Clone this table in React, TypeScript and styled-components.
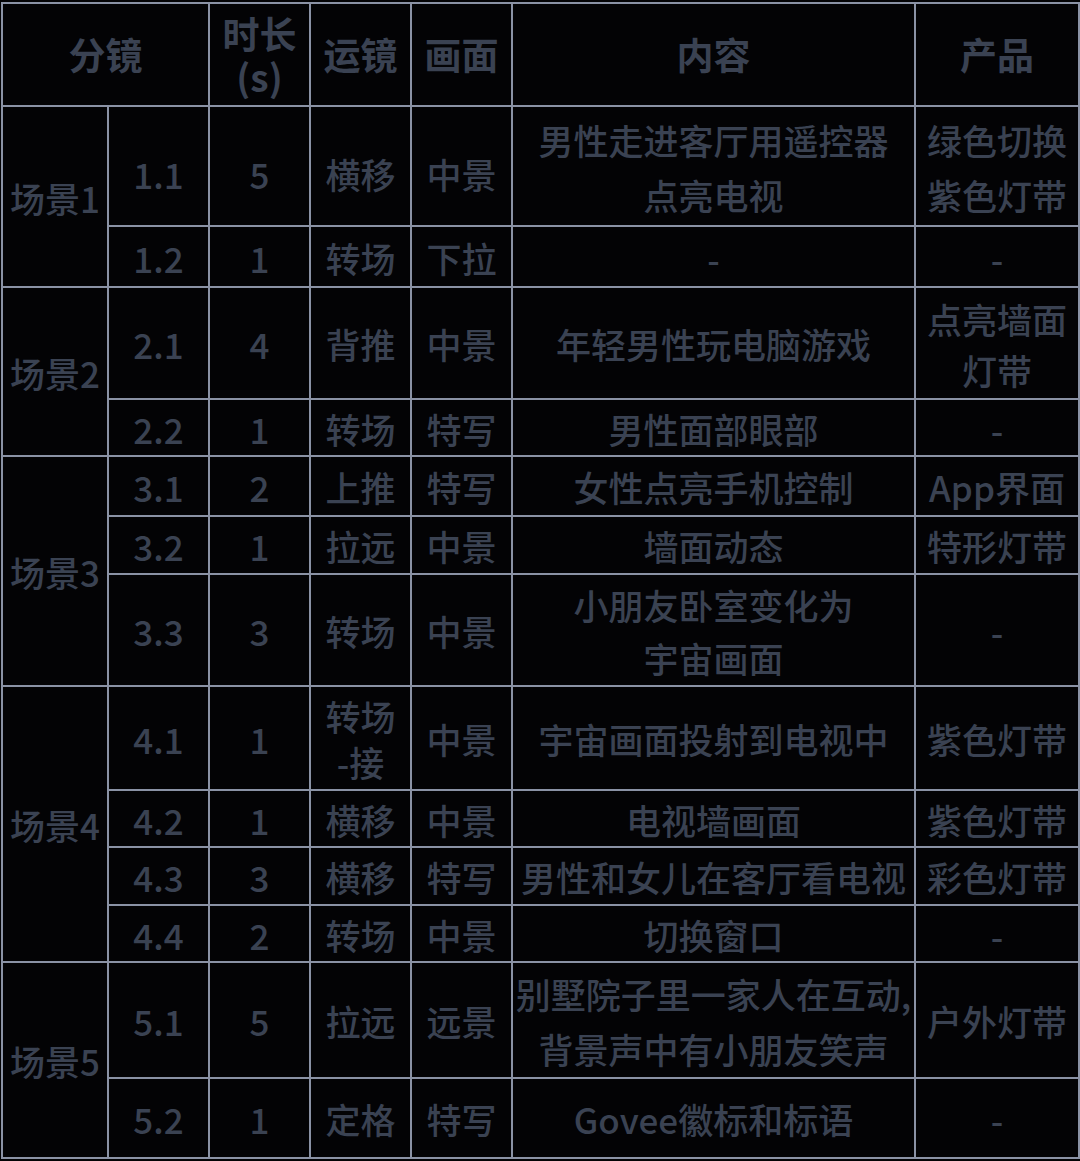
import React from "react";
import styled, { createGlobalStyle } from "styled-components";

const GlobalStyle = createGlobalStyle`
  html, body {
    margin: 0;
    padding: 0;
    background: #030305;
  }
  body {
    font-family: "Noto Sans CJK SC", "Noto Sans", sans-serif;
  }
`;

const Page = styled.div`
  padding: 2px 0 0 1px;
  background: #030305;
  min-height: 1161px;
  box-sizing: border-box;
`;

const Table = styled.table`
  width: 1077px;
  table-layout: fixed;
  border-collapse: collapse;
  color: #3a4252;
`;

const Row = styled.tr<{ $h: number }>`
  height: ${(p) => p.$h}px;
`;

const HeadCell = styled.th`
  border: 2px solid #8a92a5;
  padding: 0;
  font-size: 37px;
  font-weight: 700;
  line-height: 43px;
  text-align: center;
  vertical-align: middle;
`;

const Cell = styled.td<{ $drop?: boolean }>`
  border: 2px solid #8a92a5;
  padding: ${(p) => (p.$drop ? "16px" : "2px")} 0 0;
  font-size: 35px;
  font-weight: 500;
  line-height: 40px;
  text-align: center;
  vertical-align: middle;
  white-space: nowrap;
`;

const Lines = styled.span<{ $lh: number }>`
  display: inline-block;
  line-height: ${(p) => p.$lh}px;
  vertical-align: middle;
`;

type Shot = {
  id: string;
  dur: string;
  move: React.ReactNode;
  frame: string;
  content: React.ReactNode;
  product: React.ReactNode;
  h: number;
  drop?: boolean;
};

type Scene = { name: string; shots: Shot[] };

const two = (a: string, b: string, lh = 54) => (
  <Lines $lh={lh}>
    {a}
    <br />
    {b}
  </Lines>
);

const scenes: Scene[] = [
  {
    name: "场景1",
    shots: [
      {
        id: "1.1",
        dur: "5",
        move: "横移",
        frame: "中景",
        content: two("男性走进客厅用遥控器", "点亮电视", 55),
        product: two("绿色切换", "紫色灯带", 55),
        h: 120,
        drop: true,
      },
      { id: "1.2", dur: "1", move: "转场", frame: "下拉", content: "-", product: "-", h: 61 },
    ],
  },
  {
    name: "场景2",
    shots: [
      {
        id: "2.1",
        dur: "4",
        move: "背推",
        frame: "中景",
        content: "年轻男性玩电脑游戏",
        product: two("点亮墙面", "灯带", 51),
        h: 112,
      },
      { id: "2.2", dur: "1", move: "转场", frame: "特写", content: "男性面部眼部", product: "-", h: 57 },
    ],
  },
  {
    name: "场景3",
    shots: [
      { id: "3.1", dur: "2", move: "上推", frame: "特写", content: "女性点亮手机控制", product: "App界面", h: 60 },
      { id: "3.2", dur: "1", move: "拉远", frame: "中景", content: "墙面动态", product: "特形灯带", h: 58 },
      {
        id: "3.3",
        dur: "3",
        move: "转场",
        frame: "中景",
        content: two("小朋友卧室变化为", "宇宙画面", 53),
        product: "-",
        h: 112,
      },
    ],
  },
  {
    name: "场景4",
    shots: [
      {
        id: "4.1",
        dur: "1",
        move: two("转场", "-接", 46),
        frame: "中景",
        content: "宇宙画面投射到电视中",
        product: "紫色灯带",
        h: 104,
      },
      { id: "4.2", dur: "1", move: "横移", frame: "中景", content: "电视墙画面", product: "紫色灯带", h: 57 },
      { id: "4.3", dur: "3", move: "横移", frame: "特写", content: "男性和女儿在客厅看电视", product: "彩色灯带", h: 58 },
      { id: "4.4", dur: "2", move: "转场", frame: "中景", content: "切换窗口", product: "-", h: 57 },
    ],
  },
  {
    name: "场景5",
    shots: [
      {
        id: "5.1",
        dur: "5",
        move: "拉远",
        frame: "远景",
        content: two("别墅院子里一家人在互动,", "背景声中有小朋友笑声", 55),
        product: "户外灯带",
        h: 116,
      },
      { id: "5.2", dur: "1", move: "定格", frame: "特写", content: "Govee徽标和标语", product: "-", h: 80 },
    ],
  },
];

const colWidths = [106, 101, 101, 101, 101, 403, 164];

export default function App() {
  return (
    <>
      <GlobalStyle />
      <Page>
        <Table>
          <colgroup>
            {colWidths.map((w, i) => (
              <col key={i} style={{ width: w }} />
            ))}
          </colgroup>
          <thead>
            <Row $h={103}>
              <HeadCell colSpan={2}>分镜</HeadCell>
              <HeadCell>
                时长
                <br />
                (s)
              </HeadCell>
              <HeadCell>运镜</HeadCell>
              <HeadCell>画面</HeadCell>
              <HeadCell>内容</HeadCell>
              <HeadCell>产品</HeadCell>
            </Row>
          </thead>
          <tbody>
            {scenes.map((scene) =>
              scene.shots.map((shot, i) => (
                <Row key={shot.id} $h={shot.h}>
                  {i === 0 && <Cell rowSpan={scene.shots.length}>{scene.name}</Cell>}
                  <Cell $drop={shot.drop}>{shot.id}</Cell>
                  <Cell $drop={shot.drop}>{shot.dur}</Cell>
                  <Cell $drop={shot.drop}>{shot.move}</Cell>
                  <Cell $drop={shot.drop}>{shot.frame}</Cell>
                  <Cell>{shot.content}</Cell>
                  <Cell>{shot.product}</Cell>
                </Row>
              ))
            )}
          </tbody>
        </Table>
      </Page>
    </>
  );
}
